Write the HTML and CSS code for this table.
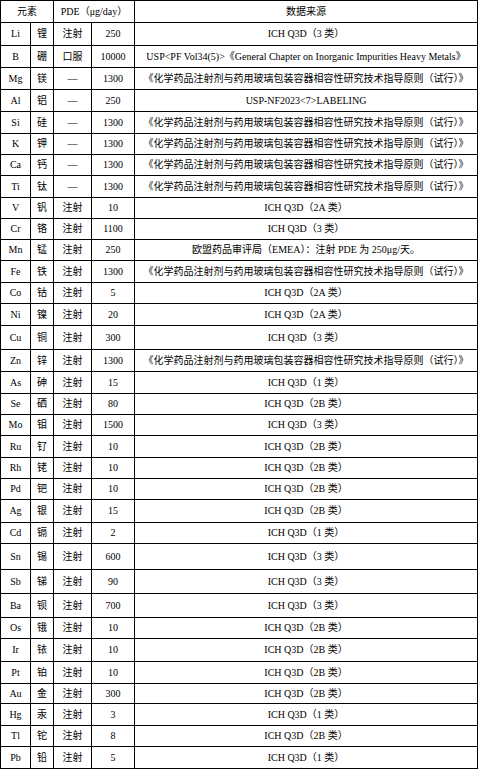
FILE: index.html
```html
<!DOCTYPE html>
<html lang="zh-CN">
<head>
<meta charset="utf-8">
<title>元素 PDE 数据来源</title>
<link rel="stylesheet" href="styles.css">
</head>
<body>
<table class="pde">
  <colgroup>
    <col class="c-sym"><col class="c-name"><col class="c-route"><col class="c-val"><col class="c-src">
  </colgroup>
  <thead>
    <tr class="r22"><th colspan="2">元素</th><th colspan="2">PDE（μg/day）</th><th>数据来源</th></tr>
  </thead>
  <tbody>
    <tr class="r23"><td>Li</td><td>锂</td><td>注射</td><td>250</td><td>ICH Q3D（3 类）</td></tr>
    <tr class="r22"><td>B</td><td>硼</td><td>口服</td><td>10000</td><td>USP&lt;PF Vol34(5)&gt;《General Chapter on Inorganic Impurities Heavy Metals》</td></tr>
    <tr class="r22"><td>Mg</td><td>镁</td><td>—</td><td>1300</td><td>《化学药品注射剂与药用玻璃包装容器相容性研究技术指导原则（试行）》</td></tr>
    <tr class="r22"><td>Al</td><td>铝</td><td>—</td><td>250</td><td>USP-NF2023&lt;7&gt;LABELING</td></tr>
    <tr class="r22"><td>Si</td><td>硅</td><td>—</td><td>1300</td><td>《化学药品注射剂与药用玻璃包装容器相容性研究技术指导原则（试行）》</td></tr>
    <tr class="r21"><td>K</td><td>钾</td><td>—</td><td>1300</td><td>《化学药品注射剂与药用玻璃包装容器相容性研究技术指导原则（试行）》</td></tr>
    <tr class="r21"><td>Ca</td><td>钙</td><td>—</td><td>1300</td><td>《化学药品注射剂与药用玻璃包装容器相容性研究技术指导原则（试行）》</td></tr>
    <tr class="r22"><td>Ti</td><td>钛</td><td>—</td><td>1300</td><td>《化学药品注射剂与药用玻璃包装容器相容性研究技术指导原则（试行）》</td></tr>
    <tr class="r21"><td>V</td><td>钒</td><td>注射</td><td>10</td><td>ICH Q3D（2A 类）</td></tr>
    <tr class="r21"><td>Cr</td><td>铬</td><td>注射</td><td>1100</td><td>ICH Q3D（3 类）</td></tr>
    <tr class="r21"><td>Mn</td><td>锰</td><td>注射</td><td>250</td><td>欧盟药品审评局（EMEA）：注射 PDE 为 250μg/天。</td></tr>
    <tr class="r22"><td>Fe</td><td>铁</td><td>注射</td><td>1300</td><td>《化学药品注射剂与药用玻璃包装容器相容性研究技术指导原则（试行）》</td></tr>
    <tr class="r21"><td>Co</td><td>钴</td><td>注射</td><td>5</td><td>ICH Q3D（2A 类）</td></tr>
    <tr class="r22"><td>Ni</td><td>镍</td><td>注射</td><td>20</td><td>ICH Q3D（2A 类）</td></tr>
    <tr class="r24"><td>Cu</td><td>铜</td><td>注射</td><td>300</td><td>ICH Q3D（3 类）</td></tr>
    <tr class="r22"><td>Zn</td><td>锌</td><td>注射</td><td>1300</td><td>《化学药品注射剂与药用玻璃包装容器相容性研究技术指导原则（试行）》</td></tr>
    <tr class="r22"><td>As</td><td>砷</td><td>注射</td><td>15</td><td>ICH Q3D（1 类）</td></tr>
    <tr class="r21"><td>Se</td><td>硒</td><td>注射</td><td>80</td><td>ICH Q3D（2B 类）</td></tr>
    <tr class="r21"><td>Mo</td><td>钼</td><td>注射</td><td>1500</td><td>ICH Q3D（3 类）</td></tr>
    <tr class="r22"><td>Ru</td><td>钌</td><td>注射</td><td>10</td><td>ICH Q3D（2B 类）</td></tr>
    <tr class="r21"><td>Rh</td><td>铑</td><td>注射</td><td>10</td><td>ICH Q3D（2B 类）</td></tr>
    <tr class="r21"><td>Pd</td><td>钯</td><td>注射</td><td>10</td><td>ICH Q3D（2B 类）</td></tr>
    <tr class="r23"><td>Ag</td><td>银</td><td>注射</td><td>15</td><td>ICH Q3D（2B 类）</td></tr>
    <tr class="r21"><td>Cd</td><td>镉</td><td>注射</td><td>2</td><td>ICH Q3D（1 类）</td></tr>
    <tr class="r26"><td>Sn</td><td>锡</td><td>注射</td><td>600</td><td>ICH Q3D（3 类）</td></tr>
    <tr class="r24"><td>Sb</td><td>锑</td><td>注射</td><td>90</td><td>ICH Q3D（3 类）</td></tr>
    <tr class="r24"><td>Ba</td><td>钡</td><td>注射</td><td>700</td><td>ICH Q3D（3 类）</td></tr>
    <tr class="r21"><td>Os</td><td>锇</td><td>注射</td><td>10</td><td>ICH Q3D（2B 类）</td></tr>
    <tr class="r23"><td>Ir</td><td>铱</td><td>注射</td><td>10</td><td>ICH Q3D（2B 类）</td></tr>
    <tr class="r22"><td>Pt</td><td>铂</td><td>注射</td><td>10</td><td>ICH Q3D（2B 类）</td></tr>
    <tr class="r20"><td>Au</td><td>金</td><td>注射</td><td>300</td><td>ICH Q3D（2B 类）</td></tr>
    <tr class="r22"><td>Hg</td><td>汞</td><td>注射</td><td>3</td><td>ICH Q3D（1 类）</td></tr>
    <tr class="r21"><td>Tl</td><td>铊</td><td>注射</td><td>8</td><td>ICH Q3D（2B 类）</td></tr>
    <tr class="r22"><td>Pb</td><td>铅</td><td>注射</td><td>5</td><td>ICH Q3D（1 类）</td></tr>
  </tbody>
</table>
</body>
</html>
```

FILE: styles.css
```css
html, body {
  margin: 0;
  padding: 0;
  background: #fff;
}

.pde {
  border-collapse: collapse;
  table-layout: fixed;
  width: 477px;
  margin: 0;
  font-family: "Liberation Serif", "Noto Sans CJK SC", serif;
  font-size: 10px;
  color: #000;
}

.c-sym { width: 30px; }
.c-name { width: 23px; }
.c-route { width: 38px; }
.c-val { width: 43px; }
.c-src { width: 343px; }

.pde th,
.pde td {
  border: 1px solid #000;
  padding: 0;
  text-align: center;
  vertical-align: middle;
  font-weight: normal;
  white-space: nowrap;
  line-height: 1.2;
}

.r20 { height: 20px; }
.r21 { height: 21px; }
.r22 { height: 22px; }
.r23 { height: 23px; }
.r24 { height: 24px; }
.r26 { height: 26px; }
```
